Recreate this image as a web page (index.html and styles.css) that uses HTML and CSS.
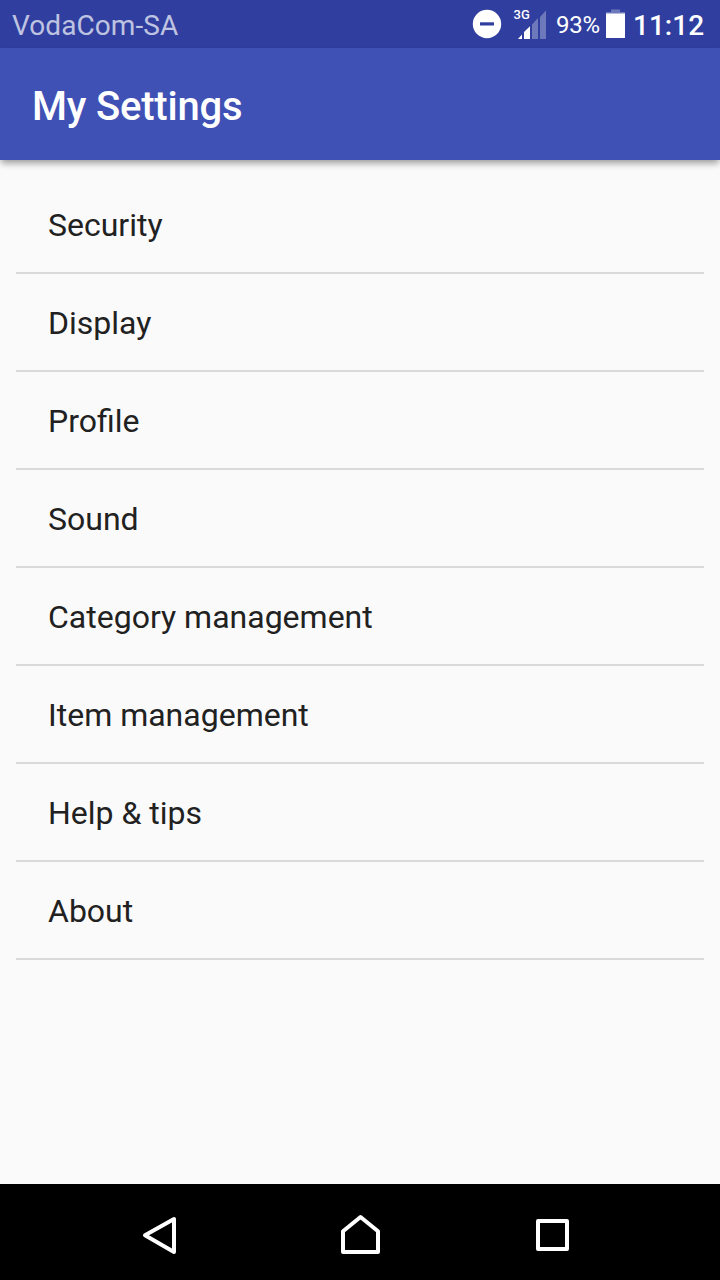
FILE: index.html
```html
<!DOCTYPE html>
<html lang="en">
<head>
<meta charset="utf-8">
<title>My Settings</title>
<link rel="stylesheet" href="styles.css">
</head>
<body>
<div class="screen">
  <div class="status-bar">
    <span class="carrier">VodaCom-SA</span>
    <svg class="dnd" width="30" height="48" viewBox="0 0 30 48">
      <circle cx="15" cy="24" r="14.2" fill="#fff"/>
      <rect x="8" y="22.3" width="14" height="3.2" fill="#303f9f"/>
    </svg>
    <svg class="signal" width="34" height="48" viewBox="0 0 34 48">
      <path d="M6 39L10 34.5V39Z" fill="#fff"/>
      <path d="M12 39V32L18 26.3V39Z" fill="#fff"/>
      <path d="M20 39V24.5L26 18V39Z M28 39V17L34 10.5V39Z" fill="#fff" fill-opacity=".3"/>
      <text class="network" x="1.5" y="18.6">3G</text>
    </svg>
    <span class="percent">93%</span>
    <svg class="battery" width="19" height="48" viewBox="0 0 19 48">
      <path d="M5 9.5H14V12H19V14H0V12H5Z" fill="#fff" fill-opacity=".3"/>
      <rect y="13.5" width="19" height="24.5" fill="#fff"/>
    </svg>
    <time class="clock">11:12</time>
  </div>
  <header class="app-bar"><h1 class="title">My Settings</h1></header>
  <main class="content">
    <ul class="settings">
      <li class="setting">Security</li>
      <li class="setting">Display</li>
      <li class="setting">Profile</li>
      <li class="setting">Sound</li>
      <li class="setting">Category management</li>
      <li class="setting">Item management</li>
      <li class="setting">Help &amp; tips</li>
      <li class="setting">About</li>
    </ul>
  </main>
  <nav class="nav-bar">
    <svg class="nav-icon" width="48" height="48" viewBox="0 0 48 48"><path d="M38 11V44L9 27.3Z"/></svg>
    <svg class="nav-icon" width="48" height="48" viewBox="0 0 48 48"><path d="M11 44V23.3L28.5 9L46 23.3V44Z"/></svg>
    <svg class="nav-icon" width="48" height="48" viewBox="0 0 48 48"><path d="M10 13H39V41H10Z"/></svg>
  </nav>
</div>
</body>
</html>
```
FILE: styles.css
```css
body {
  margin: 0;
  font-family: Roboto, "Liberation Sans", sans-serif;
}

.screen {
  display: flex;
  flex-direction: column;
  width: 720px;
  height: 1280px;
  overflow: hidden;
  background: #fafafa;
}

.status-bar {
  display: flex;
  flex: none;
  box-sizing: border-box;
  height: 48px;
  padding: 0 16px 0 12px;
  background: #303f9f;
  color: #fff;
  line-height: 52px;
  white-space: nowrap;
}

.carrier {
  flex: 1;
  font-size: 28px;
  letter-spacing: .08px;
  color: rgba(255, 255, 255, .7);
}

.signal {
  margin-left: 10px;
}

.network {
  font-size: 13px;
  font-weight: 500;
  fill: #fff;
}

.percent {
  width: 50px;
  margin-left: 10px;
  font-size: 24px;
  line-height: 50px;
  letter-spacing: -.3px;
}

.clock {
  width: 71px;
  margin-left: 8px;
  font-size: 28px;
  font-weight: 500;
}

.app-bar {
  display: flex;
  flex: none;
  align-items: center;
  height: 112px;
  padding: 0 32px;
  background: #3f51b5;
  box-shadow: 0 4px 7px -1px rgba(0, 0, 0, .4);
}

.title {
  margin: 6px 0 0;
  font-size: 40px;
  font-weight: 500;
  line-height: 48px;
  letter-spacing: -.2px;
  color: #fff;
}

.content {
  flex: 1;
  padding: 16px;
}

.settings {
  margin: 0;
  padding: 0;
  list-style: none;
}

.setting {
  height: 96px;
  padding-left: 32px;
  border-bottom: 2px solid #dadada;
  font-size: 32px;
  line-height: 98px;
  color: #212121;
}

.nav-bar {
  display: flex;
  flex: none;
  justify-content: space-between;
  box-sizing: border-box;
  height: 96px;
  padding: 24px 144px 24px 136px;
  background: #000;
}

.nav-icon {
  fill: none;
  stroke: #fff;
  stroke-width: 4;
  stroke-linejoin: round;
}
```
